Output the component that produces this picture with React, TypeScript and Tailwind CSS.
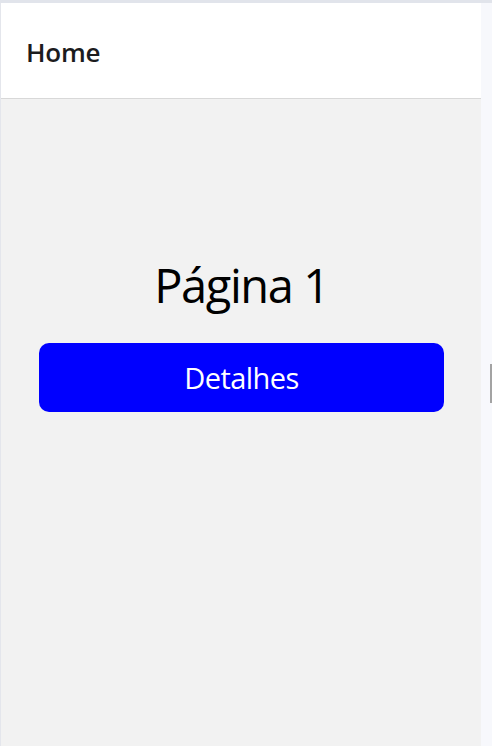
export default function App() {
  return (
    <div
      className="flex h-[746px] w-[492px] flex-col overflow-hidden border-t-[3px] border-[#e1e4eb] bg-[#f7f8fc]"
      style={{ fontFamily: '"Open Sans", "Noto Sans", sans-serif' }}
    >
      <div className="flex flex-1">
        {/* App frame */}
        <main className="flex w-[481px] flex-col border-l border-[#e4e6ec]">
          <header className="flex h-[96px] items-center border-b border-[#d8d8d8] bg-white px-[25px] pt-[3px]">
            <h1 className="text-[26px] font-semibold tracking-[-0.01em] text-[#1c1c1e]">Home</h1>
          </header>

          <section className="flex flex-1 flex-col items-center bg-[#f2f2f2] pl-[38px] pr-[37px] pt-[158px]">
            <h2 className="text-[47px] leading-[56px] tracking-[-0.03em] text-black">Página 1</h2>
            <button className="mt-[30px] flex h-[69px] w-full items-center justify-center rounded-[10px] bg-[#0000ff] text-[29px] tracking-[-0.02em] text-white">
              Detalhes
            </button>
          </section>
        </main>

        {/* Scroll gutter */}
        <div className="relative flex-1">
          <div className="absolute right-0 top-[361px] h-[39px] w-[2px] bg-[#a3a3a3]" />
        </div>
      </div>
    </div>
  )
}
